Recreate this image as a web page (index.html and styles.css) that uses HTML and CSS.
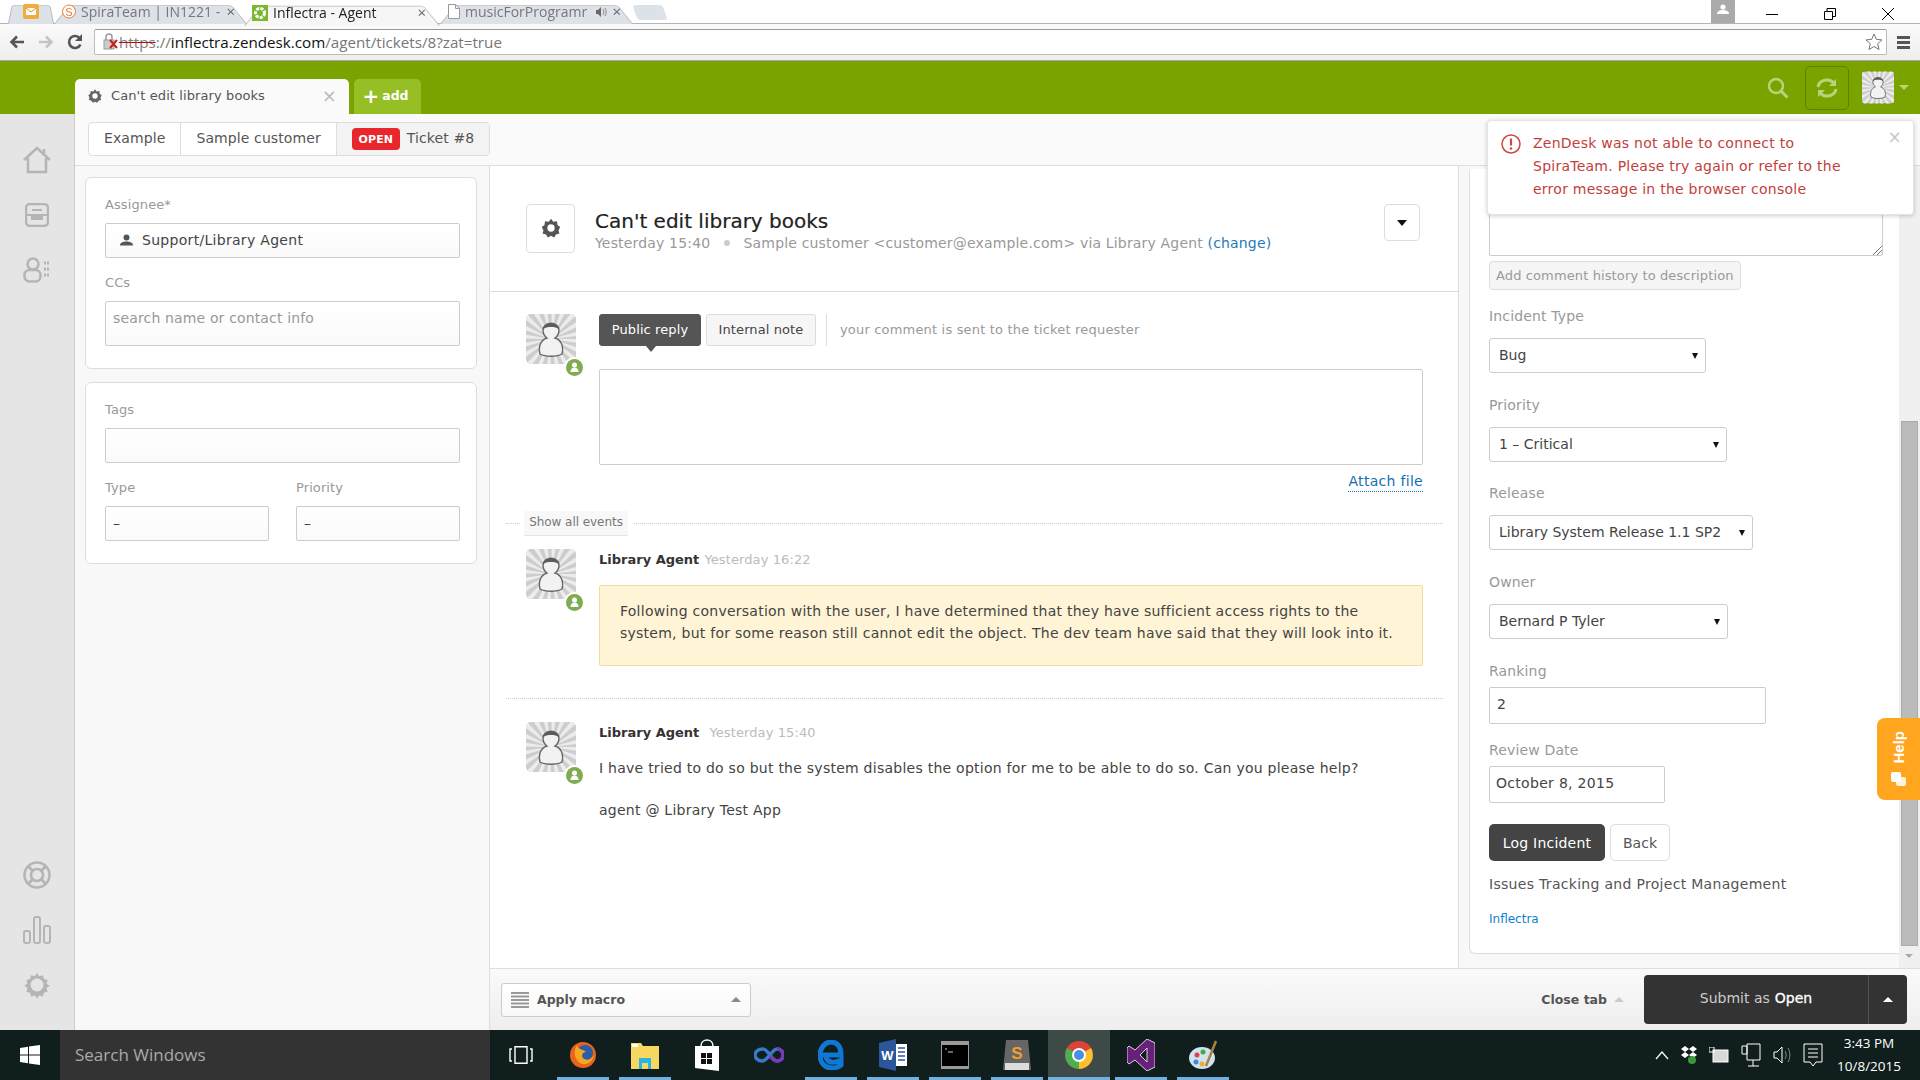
FILE: index.html
```html
<!DOCTYPE html>
<html>

<head>
    <title>Inflectra - Agent</title>
    <meta charset="utf-8">
    <link rel="stylesheet" href="styles.css">
</head>

<body>
    <svg class="defs" width="0" height="0">
        <clipPath id="avatar-clip"><rect width="50" height="50" rx="5" /></clipPath>
        <symbol id="avatar" viewBox="0 0 50 50">
            <g clip-path="url(#avatar-clip)">
                <rect width="50" height="50" fill="#cdcdcd" />
                <circle cx="25" cy="25" r="20" fill="none" stroke="#ececec" stroke-width="40" stroke-dasharray="3 3.280" />
            </g>
            <path d="M14 40c-2-8 1-14 7-16-3-2-4-5-4-8 0-9 16-9 16 0 0 3-1 6-4 8 6 2 9 8 7 16-5 3-17 3-22 0z" fill="#f2f2f2" stroke="#666" stroke-width="1.400" />
            <path d="M17 16c0-9 16-9 16 0-2-3-5-3-8-3s-6 0-8 3z" fill="#5c5c5c" />
        </symbol>
        <symbol id="presence" viewBox="0 0 21 21">
            <circle cx="10.500" cy="10.500" r="10.500" fill="#fff" />
            <circle cx="10.500" cy="10.500" r="8.500" fill="#80ab52" />
            <circle cx="10.500" cy="8" r="2.500" fill="#fff" />
            <path d="M6.500 15c0-3 1.500-4.500 4-4.500s4 1.500 4 4.500z" fill="#fff" />
        </symbol>
        <symbol id="gear" viewBox="0 0 24 24">
            <path d="M12 2l2.500 3.200 4-.6.6 4L22 11l-1.800 3.600 1 3.400-3.800 1-1.900 3.300L12 20.500 8.500 22.300l-1.900-3.300-3.800-1 1-3.400L2 11l2.900-2.400.6-4 4 .6z" fill="currentColor" />
            <circle cx="12" cy="12" r="4" fill="#fff" />
        </symbol>
        <symbol id="winlogo" viewBox="0 0 20 20">
            <path d="M0 3l8-1.200V9.500H0zM9 1.600L20 0v9.500H9zM0 10.500h8v7.700L0 17zM9 10.500h11V20L9 18.400z" fill="currentColor" />
        </symbol>
    </svg>

    <div class="tabstrip">
        <div class="ctab pinned">
            <svg width="16" height="15" viewBox="0 0 16 15"><rect width="16" height="15" rx="2" fill="#f0ad3c" /><path d="M3 4h10v7H3z" fill="#fff" /><path d="M3 4l5 4 5-4" fill="none" stroke="#e08a20" /></svg>
        </div>
        <div class="ctab">
            <svg width="14" height="15" viewBox="0 0 14 15"><circle cx="7" cy="7.500" r="6.500" fill="#fff" stroke="#ea7a3c" /><text x="7" y="11.500" font-size="11" text-anchor="middle" fill="#ea7a3c" font-family="Liberation Sans">S</text></svg>
            <span class="ctab-text">SpiraTeam | IN1221 -</span>
            <span class="ctab-x">×</span>
        </div>
        <div class="ctab current">
            <svg width="16" height="16" viewBox="0 0 16 16"><rect width="16" height="16" fill="#7cb82f" /><circle cx="8" cy="8" r="4.500" fill="none" stroke="#fff" stroke-width="3" stroke-dasharray="3 1.200" /></svg>
            <span class="ctab-text">Inflectra - Agent</span>
            <span class="ctab-x">×</span>
        </div>
        <div class="ctab">
            <svg width="12" height="15" viewBox="0 0 12 15"><path d="M.5.500h7l4 4v10H.500z" fill="#fff" stroke="#999" /><path d="M7.500.500v4h4" fill="none" stroke="#999" /></svg>
            <span class="ctab-text ctab-music">musicForProgramr</span>
            <svg class="ctab-sound" width="11" height="10" viewBox="0 0 11 10"><path d="M0 3h2l3-3v10L2 7H0z" fill="#666" /><path d="M7 2c1 2 1 4 0 6M9 1c1.500 2 1.500 6 0 8" fill="none" stroke="#888" /></svg>
            <span class="ctab-x">×</span>
        </div>
        <div class="newtab"></div>
        <div class="window-controls">
            <div class="profile"><svg width="12" height="10" viewBox="0 0 12 10"><circle cx="6" cy="3" r="2.600" fill="#fff" /><path d="M0 10c0-3 3-4 6-4s6 1 6 4z" fill="#fff" /></svg></div>
            <svg class="winbtn" width="12" height="12" viewBox="0 0 12 12"><path d="M0 6.500h12" stroke="#000" /></svg>
            <svg class="winbtn" width="12" height="12" viewBox="0 0 12 12"><path d="M.5 3.500h8v8h-8zM3 3.500V.5h8.500v8H8.500" fill="none" stroke="#000" /></svg>
            <svg class="winbtn" width="12" height="12" viewBox="0 0 12 12"><path d="M0 0l12 12M12 0L0 12" stroke="#000" /></svg>
        </div>
    </div>

    <div class="toolbar">
        <svg class="navbtn" width="16" height="14" viewBox="0 0 16 14"><path d="M15 7H3M8 1.500L2.500 7 8 12.500" fill="none" stroke="#555" stroke-width="2.600" /></svg>
        <svg class="navbtn" width="16" height="14" viewBox="0 0 16 14"><path d="M1 7h12M8 1.500L13.500 7 8 12.500" fill="none" stroke="#c4c4c4" stroke-width="2.600" /></svg>
        <svg class="navbtn" width="16" height="16" viewBox="0 0 16 16"><path d="M13.500 10.500A6 6 0 1 1 13 4.500" fill="none" stroke="#555" stroke-width="2.600" /><path d="M15 0v7H8z" fill="#555" /></svg>
        <div class="urlbar">
            <svg width="16" height="18" viewBox="0 0 16 18"><rect x="1" y="7" width="10" height="9" fill="#ccc" stroke="#999" /><path d="M3 7V4a3 3 0 0 1 6 0v3" fill="none" stroke="#999" stroke-width="1.500" /><path d="M7 7l7 8M14 7l-7 8" stroke="#c8201c" stroke-width="2" /></svg>
            <span class="url"><span class="url-https">https</span><span class="url-dim">://</span>inflectra.zendesk.com<span class="url-dim">/agent/tickets/8?zat=true</span></span>
            <svg class="star" width="18" height="18" viewBox="0 0 18 18"><path d="M9 1l2.400 5.400 5.600.5-4.300 3.800 1.300 5.800L9 13.500 4 16.500l1.300-5.800L1 6.900l5.600-.5z" fill="#fff" stroke="#777" /></svg>
        </div>
        <div class="menu-icon"><span></span><span></span><span></span></div>
    </div>

    <header class="greenbar">
        <div class="ztab">
            <svg width="16" height="16" class="ztab-gear"><use href="#gear" /></svg>
            <span class="ztab-title">Can't edit library books</span>
            <span class="ztab-x">×</span>
        </div>
        <div class="zadd"><span class="plus">+</span> add</div>
        <div class="green-tools">
            <svg width="22" height="22" viewBox="0 0 22 22"><circle cx="9" cy="9" r="7" fill="none" stroke="#b9d37a" stroke-width="2.500" /><path d="M14 14l6.500 6.500" stroke="#b9d37a" stroke-width="3" /></svg>
            <div class="refresh">
                <svg width="22" height="20" viewBox="0 0 22 20"><path d="M2 9a9 8 0 0 1 16-4M20 11a9 8 0 0 1-16 4" fill="none" stroke="#b9d37a" stroke-width="3" /><path d="M20 1v7h-7zM2 19v-7h7z" fill="#b9d37a" /></svg>
            </div>
            <svg width="32" height="33"><use href="#avatar" /></svg>
            <span class="green-caret"></span>
        </div>
    </header>

    <div class="app">
        <nav class="rail">
            <div class="rail-group">
                <div class="rail-icon"><svg width="30" height="30" viewBox="0 0 30 30"><path d="M2 15L15 3l13 12M6 13v14h18V13M22 4v4" fill="none" stroke="#b5b5b5" stroke-width="2.500" /></svg></div>
                <div class="rail-icon"><svg width="24" height="24" viewBox="0 0 24 24"><rect x="1" y="1" width="22" height="22" rx="4" fill="none" stroke="#b5b5b5" stroke-width="2.500" /><path d="M7 7h10M2 12h20M7 12h10v4H7z" fill="#b5b5b5" stroke="#b5b5b5" stroke-width="2" /></svg></div>
                <div class="rail-icon"><svg width="28" height="26" viewBox="0 0 28 26"><circle cx="10" cy="7" r="5.500" fill="none" stroke="#b5b5b5" stroke-width="2.500" /><rect x="1.500" y="13" width="16" height="11.500" rx="5" fill="none" stroke="#b5b5b5" stroke-width="2.500" /><path d="M21 6h5M21 12h5M21 18h5" stroke="#b5b5b5" stroke-width="3" stroke-dasharray="2 1" /></svg></div>
            </div>
            <div class="rail-group">
                <div class="rail-icon"><svg width="28" height="28" viewBox="0 0 28 28"><circle cx="14" cy="14" r="12.500" fill="none" stroke="#b5b5b5" stroke-width="2.500" /><circle cx="14" cy="14" r="6" fill="none" stroke="#b5b5b5" stroke-width="2.500" /><path d="M5 5l5 5M23 5l-5 5M5 23l5-5M23 23l-5-5" stroke="#b5b5b5" stroke-width="3" /></svg></div>
                <div class="rail-icon"><svg width="28" height="28" viewBox="0 0 28 28"><rect x="1" y="15" width="6" height="12" rx="2" fill="none" stroke="#b5b5b5" stroke-width="2" /><rect x="11" y="1" width="6" height="26" rx="2" fill="none" stroke="#b5b5b5" stroke-width="2" /><rect x="21" y="10" width="6" height="17" rx="2" fill="none" stroke="#b5b5b5" stroke-width="2" /></svg></div>
                <div class="rail-icon rail-gear"><svg width="26" height="26" viewBox="0 0 24 24"><path d="M12 1l2 3 3.500-1 .8 3.500 3.500.8-1 3.500 3 2-3 2 1 3.500-3.500.8-.8 3.500-3.500-1-2 3-2-3-3.500 1-.8-3.500-3.500-.8 1-3.500-3-2 3-2-1-3.500 3.500-.8.800-3.500 3.500 1z" fill="#b5b5b5" /><circle cx="12" cy="12" r="6" fill="#e5e5e5" /></svg></div>
            </div>
        </nav>

        <div class="workspace">
            <div class="subheader">
                <div class="crumbs">
                    <div class="crumb">Example</div>
                    <div class="crumb">Sample customer</div>
                    <div class="crumb crumb-active"><span class="badge-open">OPEN</span>Ticket #8</div>
                </div>
            </div>

            <div class="panes">
                <aside class="props">
                    <section class="card">
                        <div class="label">Assignee*</div>
                        <div class="input input-assignee">
                            <svg width="13" height="12" viewBox="0 0 13 12"><circle cx="6.500" cy="3.500" r="3" fill="#555" /><path d="M0 11.500c0-3 3-4 6.500-4s6.500 1 6.500 4z" fill="#555" /></svg>
                            Support/Library Agent
                        </div>
                        <div class="label label-next">CCs</div>
                        <div class="input input-tall">search name or contact info</div>
                    </section>
                    <section class="card card-second">
                        <div class="label">Tags</div>
                        <div class="input"></div>
                        <div class="two-col">
                            <div>
                                <div class="label label-next">Type</div>
                                <div class="input input-value">–</div>
                            </div>
                            <div>
                                <div class="label label-next">Priority</div>
                                <div class="input input-value">–</div>
                            </div>
                        </div>
                    </section>
                </aside>

                <div class="main-area">
                    <div class="main-row">
                        <main class="conversation">
                            <div class="ticket-head">
                                <div class="gear-box"><svg width="22" height="22"><use href="#gear" /></svg></div>
                                <div class="ticket-info">
                                    <h1>Can't edit library books</h1>
                                    <p>Yesterday 15:40 <span class="dot"></span> Sample customer &lt;customer@example.com&gt; via Library Agent <a>(change)</a></p>
                                </div>
                                <div class="head-menu"><span class="caret-down"></span></div>
                            </div>

                            <div class="thread">
                                <div class="entry">
                                    <div class="avatar"><svg width="50" height="50"><use href="#avatar" /></svg><svg class="presence" width="21" height="21"><use href="#presence" /></svg></div>
                                    <div class="entry-body">
                                        <div class="reply-tabs">
                                            <div class="reply-tab reply-public">Public reply</div>
                                            <div class="reply-tab">Internal note</div>
                                            <div class="reply-hint">your comment is sent to the ticket requester</div>
                                        </div>
                                        <div class="reply-box"></div>
                                        <div class="attach"><a>Attach file</a></div>
                                    </div>
                                </div>

                                <div class="events-row">
                                    <span class="dotted dotted-short"></span>
                                    <div class="events-btn">Show all events</div>
                                    <span class="dotted"></span>
                                </div>

                                <div class="entry entry-first">
                                    <div class="avatar"><svg width="50" height="50"><use href="#avatar" /></svg><svg class="presence" width="21" height="21"><use href="#presence" /></svg></div>
                                    <div class="entry-body">
                                        <div class="entry-head"><b>Library Agent</b> <span class="when">Yesterday 16:22</span></div>
                                        <div class="note">Following conversation with the user, I have determined that they have sufficient access rights to the system, but for some reason still cannot edit the object. The dev team have said that they will look into it.</div>
                                    </div>
                                </div>

                                <div class="separator"></div>

                                <div class="entry">
                                    <div class="avatar"><svg width="50" height="50"><use href="#avatar" /></svg><svg class="presence" width="21" height="21"><use href="#presence" /></svg></div>
                                    <div class="entry-body">
                                        <div class="entry-head"><b>Library Agent</b> <span class="when when-wide">Yesterday 15:40</span></div>
                                        <p class="message">I have tried to do so but the system disables the option for me to be able to do so. Can you please help?</p>
                                        <p class="message message-sign">agent @ Library Test App</p>
                                    </div>
                                </div>
                            </div>
                        </main>

                        <aside class="apps">
                            <div class="app-card">
                                <div class="app-textarea">
                                    <svg class="grip" width="9" height="9" viewBox="0 0 9 9"><path d="M9 0L0 9M9 4L4 9" stroke="#777" /></svg>
                                </div>
                                <div class="history-btn">Add comment history to description</div>
                                <div class="field field-first">
                                    <div class="label">Incident Type</div>
                                    <div class="select select-type">Bug</div>
                                </div>
                                <div class="field">
                                    <div class="label">Priority</div>
                                    <div class="select select-priority">1 – Critical</div>
                                </div>
                                <div class="field">
                                    <div class="label">Release</div>
                                    <div class="select select-release">Library System Release 1.1 SP2</div>
                                </div>
                                <div class="field">
                                    <div class="label">Owner</div>
                                    <div class="select select-owner">Bernard P Tyler</div>
                                </div>
                                <div class="field field-ranking">
                                    <div class="label label-tight">Ranking</div>
                                    <div class="text-input text-ranking">2</div>
                                </div>
                                <div class="field">
                                    <div class="label label-tighter">Review Date</div>
                                    <div class="text-input text-date">October 8, 2015</div>
                                </div>
                                <div class="app-buttons">
                                    <div class="btn-log">Log Incident</div>
                                    <div class="btn-back">Back</div>
                                </div>
                                <div class="app-footer">Issues Tracking and Project Management</div>
                                <a class="app-link">Inflectra</a>
                            </div>
                            <div class="scrollbar">
                                <div class="scroll-thumb"></div>
                                <span class="scroll-down"></span>
                            </div>
                        </aside>
                    </div>

                    <div class="actionbar">
                        <div class="macro">
                            <svg width="18" height="16" viewBox="0 0 18 16"><path d="M0 1h18M0 4.500h18M0 8h18M0 11.500h18M0 15h18" stroke="#999" stroke-width="2" /></svg>
                            <b>Apply macro</b>
                            <span class="caret-up"></span>
                        </div>
                        <div class="close-tab"><b>Close tab</b><span class="caret-up caret-light"></span></div>
                        <div class="submit">
                            <div class="submit-main">Submit as <b>Open</b></div>
                            <div class="submit-more"><span class="caret-up caret-white"></span></div>
                        </div>
                    </div>
                </div>
            </div>
        </div>

        <div class="toast">
            <svg width="20" height="20" viewBox="0 0 20 20"><circle cx="10" cy="10" r="9" fill="none" stroke="#c94a46" stroke-width="1.500" /><path d="M10 4.500v7" stroke="#c94a46" stroke-width="2.200" /><circle cx="10" cy="14.500" r="1.300" fill="#c94a46" /></svg>
            <p>ZenDesk was not able to connect to SpiraTeam. Please try again or refer to the error message in the browser console</p>
            <span class="toast-x">×</span>
        </div>

        <div class="help-tab">
            <span>Help</span>
            <svg width="16" height="15" viewBox="0 0 16 15"><rect x="0" y="0" width="10" height="10" rx="2" fill="#fff" /><rect x="5" y="5" width="10" height="9" rx="2" fill="#fff" opacity=".85" /></svg>
        </div>
    </div>

    <footer class="taskbar">
        <div class="start"><svg width="20" height="20"><use href="#winlogo" /></svg></div>
        <div class="search-win">Search Windows</div>
        <div class="task-icons">
            <div class="task"><svg width="24" height="18" viewBox="0 0 24 18"><path d="M6 .7h12v16.600H6zM3 3H1v12h2M21 3h2v12h-2" fill="none" stroke="#fff" stroke-width="1.400" /></svg></div>
            <div class="task running"><svg width="30" height="30" viewBox="0 0 30 30"><circle cx="15" cy="15" r="13" fill="#e8641b" /><circle cx="17" cy="13" r="8" fill="#2a5fa8" /><path d="M9 5c-4 6-3 16 5 19 6 1 11-3 12-9-3 5-8 6-11 3-2-3 0-6 3-6-3-3-8-2-9-7z" fill="#f5a623" /></svg></div>
            <div class="task running"><svg width="30" height="28" viewBox="0 0 30 28"><path d="M1 2h10l2 3h16v23H1z" fill="#f6d860" /><path d="M2 3h6v3H2z" fill="#fff" /><path d="M9 17h12v11h-3v-6h-6v6H9z" fill="#2ab4e8" /></svg></div>
            <div class="task"><svg width="26" height="32" viewBox="0 0 26 32"><path d="M1 7l24 0v25L1 29z" fill="#fff" /><path d="M7 7c0-8 12-8 12 0" fill="none" stroke="#fff" stroke-width="1.500" /><path d="M7 14h5v5H7zM13 14h5v5h-5zM7 20h5v5H7zM13 20h5v5h-5z" fill="#111" /></svg></div>
            <div class="task"><svg width="30" height="22" viewBox="0 0 30 22"><path d="M9 5c-5 0-8 3-8 6s3 6 7 6c6 0 10-12 15-12 4 0 6 3 6 6s-2 6-6 6c-5 0-9-12-14-12z" fill="none" stroke="#3a78c8" stroke-width="3.500" /><path d="M23 5c4 0 6 3 6 6s-2 6-6 6c-3 0-5-3-7-5" fill="none" stroke="#7a3ab8" stroke-width="3.500" /></svg></div>
            <div class="task running"><svg width="26" height="30" viewBox="0 0 26 30"><path d="M4 15h19C23 5 18 2 13 2 7 2 2 8 2 15c0 9 6 13 12 13 4 0 7-1 9-3v-5c-5 3-13 4-15-3" fill="none" stroke="#0f78d4" stroke-width="5" /></svg></div>
            <div class="task running"><svg width="28" height="32" viewBox="0 0 28 32"><path d="M17 0L0 4v24l17 4z" fill="#2b579a" /><path d="M17 5h11v22H17z" fill="#fff" /><path d="M19 9h7M19 13h7M19 17h7M19 21h7" stroke="#2b579a" stroke-width="1.500" /><text x="8.500" y="21" font-size="13" font-weight="700" text-anchor="middle" fill="#fff" font-family="Liberation Sans">W</text></svg></div>
            <div class="task running"><svg width="28" height="28" viewBox="0 0 28 28"><rect width="28" height="28" fill="#999" /><rect x="1" y="4" width="26" height="21" fill="#000" /><path d="M4 8h2M7 11h5" stroke="#ccc" /></svg></div>
            <div class="task running"><svg width="28" height="32" viewBox="0 0 28 32"><path d="M3 1h22l3 30H0z" fill="#666" /><path d="M2 24h24v7H2z" fill="#ddd" /><text x="14" y="20" font-size="17" font-weight="700" text-anchor="middle" fill="#f0a030" font-family="Liberation Sans">S</text></svg></div>
            <div class="task running task-current"><svg width="28" height="28" viewBox="0 0 28 28"><circle cx="14" cy="14" r="14" fill="#db4437" /><path d="M14 14L26 7A14 14 0 0 1 14 28z" fill="#fbc02d" /><path d="M14 14l0 14A14 14 0 0 1 2 7z" fill="#4caf50" /><circle cx="14" cy="14" r="7" fill="#fff" /><circle cx="14" cy="14" r="5" fill="#4a8fe0" /></svg></div>
            <div class="task running"><svg width="28" height="32" viewBox="0 0 28 32"><path d="M20 0l8 4v24l-8 4-12-11-6 4-2-2V9l2-2 6 4zM20 9l-7 7 7 7z" fill="#68217a" stroke="#fff" stroke-width=".8" /></svg></div>
            <div class="task running"><svg width="30" height="30" viewBox="0 0 30 30"><ellipse cx="14" cy="18" rx="13" ry="11" fill="#cfe3f0" /><circle cx="9" cy="15" r="2.500" fill="#d44" /><circle cx="15" cy="12" r="2.500" fill="#4a4" /><circle cx="8" cy="22" r="2.500" fill="#48c" /><circle cx="14" cy="24" r="2.500" fill="#ea3" /><path d="M28 1L18 26" stroke="#b08040" stroke-width="2.500" /></svg></div>
        </div>
        <div class="tray">
            <svg width="14" height="9" viewBox="0 0 14 9"><path d="M1 8l6-7 6 7" fill="none" stroke="#fff" stroke-width="1.200" /></svg>
            <svg width="16" height="20" viewBox="0 0 16 20"><path d="M4 1l4 3-4 3-4-3zM12 1l4 3-4 3-4-3zM4 7l4 3-4 3-4-3zM12 7l4 3-4 3-4-3z" fill="#fff" /><circle cx="11" cy="15" r="4" fill="#3a9a3a" /></svg>
            <svg width="20" height="16" viewBox="0 0 20 16"><rect x="4" y="3" width="15" height="12" fill="#d8d8d8" stroke="#fff" /><rect x="0" y="0" width="5" height="5" fill="none" stroke="#fff" /></svg>
            <svg width="20" height="24" viewBox="0 0 20 24"><path d="M6 1h13v16H6zM12 17v6M7 23h11M1 3h5v8H1z" fill="none" stroke="#fff" /></svg>
            <svg width="18" height="20" viewBox="0 0 18 20"><path d="M1 7h3l5-5v16l-5-5H1z" fill="none" stroke="#fff" /><path d="M12 6c1.500 2 1.500 6 0 8M15 3c2.500 4 2.500 10 0 14" fill="none" stroke="#888" /></svg>
            <svg width="20" height="24" viewBox="0 0 20 24"><path d="M1 1h18v18h-6l-3 4-3-4H1zM5 6h10M5 10h10M5 14h10" fill="none" stroke="#fff" /></svg>
            <div class="clock"><div>3:43 PM</div><div>10/8/2015</div></div>
        </div>
    </footer>
</body>

</html>
```

FILE: styles.css
```css
* {
    box-sizing: border-box;
}

html,
body {
    margin: 0;
    height: 1080px;
    overflow: hidden;
}

body {
    display: flex;
    flex-direction: column;
    font-family: "DejaVu Sans", sans-serif;
    font-size: 13px;
    color: #444;
    background: #fff;
}

p,
h1 {
    margin: 0;
}

a {
    color: #146fb0;
}

.defs {
    position: absolute;
}

/* browser chrome */
.tabstrip {
    height: 24px;
    display: flex;
    align-items: stretch;
    padding-left: 8px;
    background: #fff;
    font-family: "Open Sans", sans-serif;
    font-size: 14px;
    color: #777;
    border-bottom: 1px solid #b4b4b4;
}

.ctab {
    position: relative;
    z-index: 0;
    display: flex;
    align-items: center;
    gap: 5px;
    width: 193px;
    padding: 0 12px 0 8px;
    white-space: nowrap;
}

.ctab::before {
    content: "";
    position: absolute;
    z-index: -1;
    inset: 1px 0 -1px;
    background: #dde1e8;
    border: 1px solid #b4b8bd;
    border-bottom: none;
    border-radius: 4px 4px 0 0;
    transform: perspective(30px) rotateX(14deg);
    transform-origin: bottom;
}

.ctab.pinned {
    width: 46px;
    padding-left: 15px;
}

.ctab.current {
    width: 196px;
    height: 25px;
    margin-left: -3px;
    padding-right: 14px;
    color: #222;
    z-index: 1;
}

.ctab.current::before {
    background: #f6f6f6;
}

.ctab-text {
    flex: 1;
}

.ctab-music {
    flex: none;
    width: 122px;
    margin-right: auto;
}

.ctab-x {
    color: #666;
    font-size: 15px;
    line-height: 1;
}

.ctab-sound {
    flex: none;
}

.newtab {
    width: 30px;
    height: 15px;
    margin: 5px 0 0 2px;
    background: #dde1e8;
    border-radius: 3px;
    transform: skewX(20deg);
}

.window-controls {
    margin-left: auto;
    display: flex;
    align-items: center;
    margin-top: -1px;
    padding-right: 26px;
}

.profile {
    width: 24px;
    height: 24px;
    background: #aaa;
    display: flex;
    justify-content: center;
    padding-top: 5px;
    margin-right: 31px;
}

.winbtn {
    margin: 6px 46px 0 0;
}

.winbtn:last-child {
    margin-right: 0;
}

.toolbar {
    height: 37px;
    display: flex;
    align-items: center;
    padding-left: 9px;
    background: linear-gradient(#fafafa, #eee);
    border-bottom: 1px solid #aaa;
}

.navbtn {
    margin-right: 13px;
}

.navbtn:nth-child(3) {
    margin-right: 11px;
}

.urlbar {
    flex: none;
    width: 1793px;
    height: 26px;
    display: flex;
    align-items: center;
    padding: 0 3px 0 8px;
    background: #fff;
    border: 1px solid #bbb;
    border-top-color: #999;
    border-radius: 2px;
    font-family: "Open Sans", sans-serif;
    font-size: 15.200px;
    color: #111;
}

.url-https {
    color: #8a7a7a;
    text-decoration: line-through;
    text-decoration-color: #b01010;
}

.url-dim {
    color: #777;
}

.star {
    margin-left: auto;
}

.menu-icon {
    width: 13px;
    margin-left: 10px;
    display: flex;
    flex-direction: column;
    gap: 2px;
}

.menu-icon span {
    height: 3px;
    background: #555;
}

/* green top bar */
.greenbar {
    height: 53px;
    display: flex;
    align-items: flex-end;
    padding-left: 75px;
    background: #7ba300;
}

.ztab {
    width: 274px;
    height: 35px;
    display: flex;
    align-items: center;
    padding: 0 12px 2px;
    background: #fafafa;
    border-radius: 5px 5px 0 0;
    color: #555;
    letter-spacing: .1px;
}

.ztab-gear {
    color: #666;
    margin-right: 8px;
}

.ztab-title {
    flex: 1;
}

.ztab-x {
    font-size: 18px;
    color: #bbb;
}

.zadd {
    width: 67px;
    height: 35px;
    margin-left: 5px;
    display: flex;
    align-items: center;
    justify-content: center;
    gap: 3px;
    padding: 0 4px 2px 0;
    background: #95bf24;
    border-radius: 5px 5px 0 0;
    color: #fff;
    font-weight: 700;
    font-size: 12.500px;
}

.plus {
    font-size: 20px;
    line-height: 1;
}

.green-tools {
    margin-left: auto;
    align-self: center;
    display: flex;
    align-items: center;
    padding-right: 11px;
}

.refresh {
    width: 44px;
    height: 44px;
    margin: 0 13px 0 16px;
    display: flex;
    align-items: center;
    justify-content: center;
    border: 1px solid #5f8000;
    border-radius: 5px;
}

.green-caret {
    margin-left: 5px;
    border: 5px solid transparent;
    border-top: 5px solid #b9d37a;
    border-bottom: none;
}

/* app frame */
.app {
    position: relative;
    height: 916px;
    display: flex;
}

.rail {
    width: 75px;
    display: flex;
    flex-direction: column;
    justify-content: space-between;
    padding: 18px 0 18px;
    background: #e5e5e5;
    border-right: 1px solid #ccc;
}

.rail-icon {
    height: 55px;
    display: flex;
    align-items: center;
    justify-content: center;
}

.workspace {
    flex: 1;
    display: flex;
    flex-direction: column;
    min-width: 0;
}

.subheader {
    height: 52px;
    padding: 8px 0 0 13px;
    background: #fafafa;
    border-bottom: 1px solid #ddd;
}

.crumbs {
    display: inline-flex;
    height: 34px;
    border: 1px solid #ddd;
    border-radius: 4px;
    background: #fff;
    color: #555;
    font-size: 14px;
}

.crumb {
    display: flex;
    align-items: center;
    justify-content: center;
    padding: 0 15px 2px;
    border-right: 1px solid #ddd;
    letter-spacing: .1px;
}

.crumb-active {
    padding: 0 15px 2px;
    background: #f3f3f3;
    border-right: none;
    border-radius: 0 4px 4px 0;
}

.badge-open {
    width: 48px;
    height: 22px;
    margin: 2px 7px 0 0;
    display: flex;
    align-items: center;
    justify-content: center;
    background: #e8262b;
    border-radius: 4px;
    color: #fff;
    font-size: 11px;
    font-weight: 700;
}

.panes {
    flex: 1;
    display: flex;
    min-height: 0;
}

/* left properties */
.props {
    width: 415px;
    flex: none;
    padding: 11px 0 0 10px;
    background: #f8f8f8;
    border-right: 1px solid #ddd;
}

.card {
    width: 392px;
    padding: 17px 16px 22px 19px;
    background: #fff;
    border: 1px solid #ddd;
    border-radius: 6px;
}

.card-second {
    margin-top: 13px;
    padding-top: 17px;
}

.label {
    height: 20px;
    margin-bottom: 8px;
    line-height: 20px;
    color: #999;
    letter-spacing: .1px;
}

.label-next {
    margin-top: 15px;
}

.input {
    height: 35px;
    padding: 0 7px;
    line-height: 32px;
    background: linear-gradient(#fff, #fafafa);
    border: 1px solid #ccc;
    border-radius: 2px;
    color: #999;
    font-size: 14px;
    letter-spacing: .15px;
}

.input-assignee {
    display: flex;
    align-items: center;
    gap: 9px;
    padding: 0 0 2px 14px;
    color: #444;
    letter-spacing: .3px;
}

.input-tall {
    height: 45px;
}

.input-value {
    color: #444;
}

.two-col {
    display: grid;
    grid-template-columns: 164px 164px;
    column-gap: 27px;
}

/* conversation */
.main-area {
    flex: 1;
    min-width: 0;
    display: flex;
    flex-direction: column;
}

.main-row {
    flex: 1;
    min-height: 0;
    display: flex;
}

.conversation {
    width: 969px;
    flex: none;
    background: #fff;
    border-right: 1px solid #ddd;
}

.ticket-head {
    height: 126px;
    display: flex;
    align-items: flex-start;
    padding: 38px 38px 0 36px;
    border-bottom: 1px solid #ddd;
}

.gear-box {
    width: 49px;
    height: 49px;
    display: flex;
    align-items: center;
    justify-content: center;
    padding-bottom: 1px;
    border: 1px solid #ddd;
    border-radius: 4px;
    color: #555;
}

.ticket-info {
    flex: 1;
    padding: 6px 0 0 20px;
}

.ticket-info h1 {
    font-size: 20px;
    font-weight: 400;
    line-height: 22px;
    color: #222;
    -webkit-text-stroke: .2px #222;
}

.ticket-info p {
    line-height: 22px;
    font-size: 14px;
    letter-spacing: .17px;
    color: #999;
}

.ticket-info a {
    color: #1f7ab8;
}

.dot {
    display: inline-block;
    width: 6px;
    height: 6px;
    margin: 0 9px 2px;
    border-radius: 50%;
    background: #ccc;
}

.head-menu {
    width: 36px;
    height: 37px;
    display: flex;
    align-items: center;
    justify-content: center;
    border: 1px solid #ddd;
    border-radius: 4px;
}

.caret-down {
    border: 5px solid transparent;
    border-top: 6px solid #111;
    border-bottom: none;
}

.thread {
    padding: 22px 35px 0 36px;
}

.entry {
    display: flex;
}

.entry-first {
    margin-top: 13px;
}

.avatar {
    position: relative;
    flex: none;
    width: 50px;
    height: 50px;
    margin-right: 23px;
}

.presence {
    position: absolute;
    left: 38px;
    top: 43px;
}

.entry-body {
    flex: 1;
    min-width: 0;
}

.reply-tabs {
    display: flex;
    align-items: stretch;
    height: 32px;
    letter-spacing: .1px;
}

.reply-tab {
    display: flex;
    align-items: center;
    justify-content: center;
    margin-right: 5px;
    padding-bottom: 2px;
    width: 110px;
    background: #f6f6f6;
    border: 1px solid #ddd;
    border-radius: 3px;
    color: #444;
}

.reply-public {
    position: relative;
    width: 102px;
    background: #555;
    border-color: #555;
    color: #fff;
}

.reply-public::after {
    content: "";
    position: absolute;
    left: 46px;
    bottom: -7px;
    border: 5px solid transparent;
    border-top: 6px solid #555;
    border-bottom: none;
}

.reply-hint {
    display: flex;
    align-items: center;
    margin-left: 5px;
    padding: 0 0 2px 13px;
    border-left: 1px solid #ddd;
    color: #999;
    letter-spacing: .18px;
}

.reply-box {
    height: 96px;
    margin-top: 23px;
    border: 1px solid #ccc;
    border-radius: 2px;
}

.attach {
    margin-top: 6px;
    text-align: right;
    line-height: 20px;
    font-size: 14px;
    letter-spacing: .3px;
}

.attach a {
    display: inline-block;
    border-bottom: 1px dotted #146fb0;
}

.events-row {
    display: flex;
    align-items: center;
    margin: 19px -20px 0;
    height: 25px;
}

.dotted {
    flex: 1;
    border-top: 1px dotted #ccc;
}

.dotted-short {
    flex: none;
    width: 14px;
    margin-right: 4px;
}

.events-btn {
    width: 104px;
    height: 25px;
    margin-right: 6px;
    line-height: 23px;
    text-align: center;
    background: #f8f8f8;
    border-bottom: 1px solid #e5e5e5;
    font-size: 12px;
    letter-spacing: -.05px;
    color: #777;
}

.entry-head {
    margin-top: 1px;
    line-height: 20px;
    color: #333;
}

.when {
    margin-left: 1px;
    letter-spacing: .1px;
    color: #bbb;
}

.when-wide {
    margin-left: 6px;
}

.note {
    height: 81px;
    margin-top: 15px;
    padding: 14px 20px;
    background: #fff4d6;
    border: 1px solid #f0dc9c;
    border-radius: 2px;
    line-height: 22px;
    color: #444;
    font-size: 14px;
    letter-spacing: .25px;
}

.separator {
    margin: 32px -20px 23px;
    border-top: 1px dotted #ccc;
}

.message {
    margin-top: 14px;
    line-height: 22px;
    font-size: 14px;
    letter-spacing: .25px;
}

.message-sign {
    margin-top: 20px;
}

/* right app sidebar */
.apps {
    flex: 1;
    min-width: 0;
    display: flex;
    padding-left: 10px;
    background: #f8f8f8;
}

.app-card {
    width: 430px;
    height: 785px;
    margin-top: 3px;
    padding: 11px 19px 0;
    background: #fff;
    border: 1px solid #ddd;
    border-top: none;
    border-right: none;
    border-radius: 0 0 0 6px;
}

.app-textarea {
    position: relative;
    width: 394px;
    height: 76px;
    border: 1px solid #ccc;
    border-radius: 2px;
}

.grip {
    position: absolute;
    right: 0;
    bottom: 0;
}

.history-btn {
    display: inline-block;
    height: 29px;
    margin-top: 5px;
    padding: 0 6px;
    line-height: 27px;
    background: #f5f5f5;
    border: 1px solid #ddd;
    border-radius: 4px;
    color: #999;
    letter-spacing: .12px;
}

.field {
    margin-bottom: 21.670px;
    font-size: 14px;
}

.field-first {
    margin-top: 16px;
}

.field-ranking {
    margin-bottom: 16px;
}

.field .label {
    margin-bottom: 12px;
    letter-spacing: .15px;
}

.field .label-tight {
    margin-bottom: 6px;
}

.field .label-tighter {
    margin-bottom: 6px;
}

.select {
    position: relative;
    height: 35px;
    padding-left: 9px;
    line-height: 33px;
    background: #fff;
    border: 1px solid #ccc;
    border-radius: 3px;
    color: #444;
}

.select::after {
    content: "";
    position: absolute;
    top: 14px;
    right: 7px;
    border: 3px solid transparent;
    border-top: 6px solid #111;
    border-bottom: none;
}

.select-type {
    width: 217px;
}

.select-priority {
    width: 238px;
}

.select-release {
    width: 264px;
}

.select-owner {
    width: 239px;
}

.text-input {
    height: 37px;
    padding-left: 7px;
    line-height: 33px;
    border: 1px solid #ccc;
    border-radius: 2px;
    color: #444;
    letter-spacing: .3px;
}

.text-ranking {
    width: 277px;
}

.text-date {
    width: 176px;
    padding-left: 6px;
}

.app-buttons {
    display: flex;
    gap: 5px;
    margin-top: 1px;
    font-size: 14px;
}

.btn-log,
.btn-back {
    height: 37px;
    display: flex;
    align-items: center;
    justify-content: center;
    border-radius: 5px;
}

.btn-log {
    width: 116px;
    background: #444;
    color: #fff;
    letter-spacing: .2px;
}

.btn-back {
    width: 60px;
    border: 1px solid #ddd;
    color: #555;
}

.app-footer {
    margin-top: 13px;
    line-height: 20px;
    color: #555;
    font-size: 14px;
    letter-spacing: .3px;
}

.app-link {
    display: block;
    margin-top: 15px;
    line-height: 20px;
    font-size: 12px;
    color: #0f7fd0;
}

.scrollbar {
    position: relative;
    width: 21px;
    background: #f0f0f0;
    padding: 255px 2px 0;
}

.scroll-thumb {
    height: 525px;
    background: #bbb;
    border: 1px solid #aaa;
}

.scroll-down {
    position: absolute;
    top: 788px;
    left: 6px;
    border: 4px solid transparent;
    border-top: 4px solid #aaa;
    border-bottom: none;
}

/* bottom action bar */
.actionbar {
    height: 62px;
    flex: none;
    display: flex;
    align-items: center;
    padding: 0 13px 0 11px;
    background: linear-gradient(#fafafa, #eee);
    border-top: 1px solid #ddd;
}

.macro {
    width: 250px;
    height: 34px;
    display: flex;
    align-items: center;
    gap: 8px;
    padding: 0 9px;
    background: linear-gradient(#fff, #f8f8f8);
    border: 1px solid #ccc;
    border-radius: 3px;
    color: #555;
    font-size: 12.500px;
}

.macro .caret-up {
    margin-left: auto;
}

.caret-up {
    display: inline-block;
    border: 5px solid transparent;
    border-bottom: 5px solid #888;
    border-top: none;
}

.caret-light {
    margin-left: 7px;
    border-bottom-color: #ccc;
}

.caret-white {
    border-bottom-color: #fff;
}

.close-tab {
    margin-left: auto;
    margin-right: 20px;
    display: flex;
    align-items: center;
    color: #555;
    font-size: 12.500px;
}

.submit {
    width: 263px;
    height: 49px;
    display: flex;
    background: #333;
    border-radius: 4px;
    color: #ccc;
}

.submit-main {
    flex: 1;
    display: flex;
    align-items: center;
    justify-content: center;
    gap: 5px;
    padding-bottom: 4px;
    font-size: 14px;
}

.submit-main b {
    color: #fff;
    font-weight: 400;
    -webkit-text-stroke: .3px #fff;
}

.submit-more {
    width: 39px;
    display: flex;
    align-items: center;
    justify-content: center;
    border-left: 1px solid #555;
}

/* overlays */
.toast {
    position: absolute;
    top: 6px;
    left: 1487px;
    width: 427px;
    height: 95px;
    display: flex;
    padding: 13px 13px 0;
    background: #fff;
    border: 1px solid #e5e5e5;
    border-radius: 4px;
    box-shadow: 0 1px 4px rgba(0, 0, 0, .2);
    color: #c0413c;
    font-size: 14px;
    letter-spacing: .25px;
}

.toast svg {
    flex: none;
    margin-right: 12px;
}

.toast p {
    width: 320px;
    margin-top: -2px;
    line-height: 23px;
}

.toast-x {
    position: absolute;
    top: 8px;
    right: 11px;
    color: #c8c8c8;
    font-size: 17px;
    line-height: 1;
}

.help-tab {
    position: absolute;
    top: 604px;
    left: 1877px;
    width: 43px;
    height: 82px;
    display: flex;
    flex-direction: column;
    align-items: center;
    justify-content: center;
    gap: 8px;
    background: #ffa51e;
    border-radius: 8px 0 0 8px;
    color: #fff;
    font-family: "Liberation Sans", sans-serif;
    font-size: 15px;
    font-weight: 700;
}

.help-tab span {
    writing-mode: vertical-rl;
    transform: rotate(180deg);
}

/* windows taskbar */
.taskbar {
    height: 50px;
    flex: none;
    display: flex;
    background: #101f1d;
    color: #fff;
    font-family: "Open Sans", sans-serif;
}

.start {
    width: 60px;
    display: flex;
    align-items: center;
    justify-content: center;
}

.search-win {
    width: 430px;
    padding-left: 15px;
    line-height: 50px;
    background: #333;
    font-size: 17px;
    color: #aaa;
}

.task-icons {
    display: flex;
}

.task {
    position: relative;
    width: 62px;
    display: flex;
    align-items: center;
    justify-content: center;
}

.running::after {
    content: "";
    position: absolute;
    left: 5px;
    right: 5px;
    bottom: 0;
    height: 3px;
    background: #6fb1e0;
}

.task-current {
    background: #3d4a48;
}

.task-current::after {
    left: 0;
    right: 0;
}

.tray {
    margin-left: auto;
    display: flex;
    align-items: center;
    gap: 12px;
    padding-right: 15px;
}

.clock {
    width: 72px;
    margin-left: -2px;
    text-align: center;
    font-size: 13.500px;
    line-height: 23px;
}
```
